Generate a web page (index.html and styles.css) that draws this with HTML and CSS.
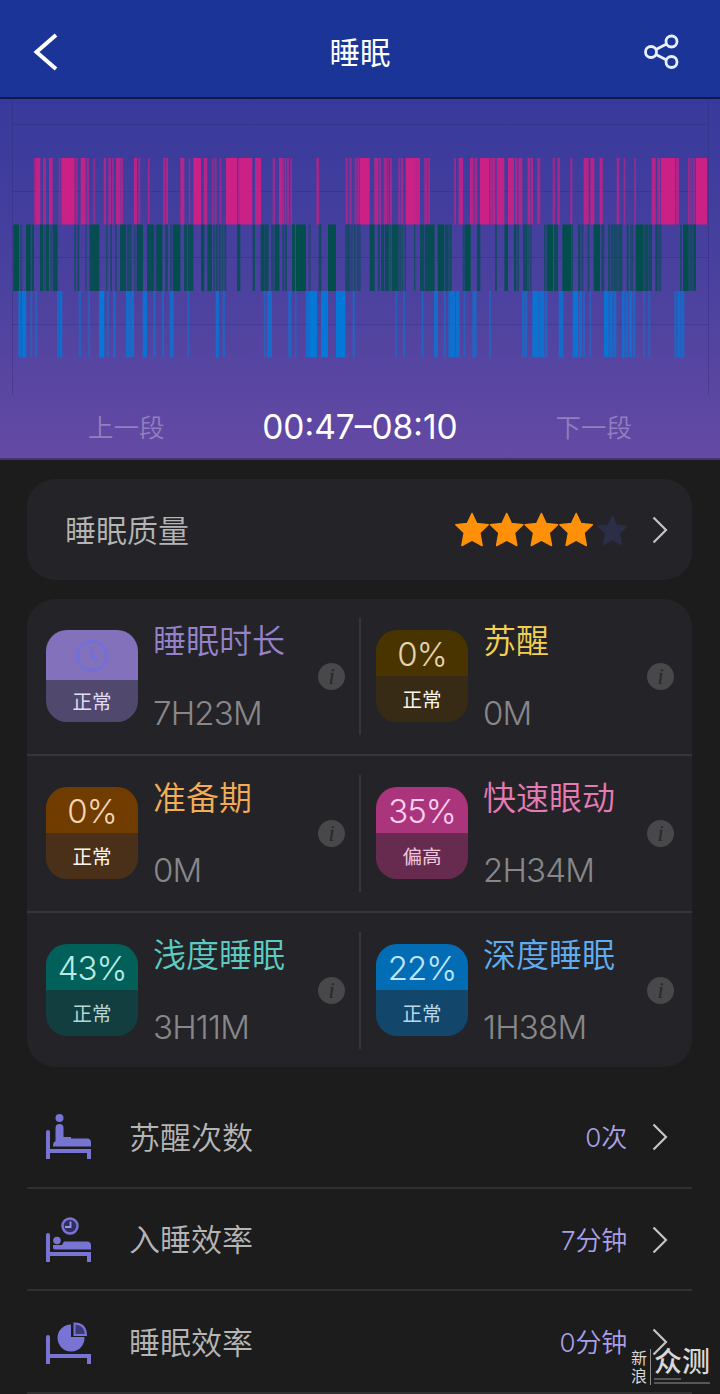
FILE: index.html
```html
<!DOCTYPE html>
<html lang="zh-CN">
<head>
    <meta charset="UTF-8">
    <meta name="viewport" content="width=device-width, initial-scale=1.0">
    <title>睡眠</title>
    <link rel="stylesheet" href="styles.css">
</head>
<body>

    <header class="topbar">
        <svg class="back" viewBox="0 0 28 40"><path d="M25 3 5.500 20 25 37"/></svg>
        <h1>睡眠</h1>
        <svg class="share" viewBox="0 0 36 36">
            <circle cx="7" cy="18" r="5.500"/><circle cx="27.500" cy="7.500" r="5.500"/><circle cx="27.500" cy="28" r="5.500"/>
            <path d="M12 15.500 22.500 10M12 20.500 22.500 26"/>
        </svg>
    </header>

    <section class="chart">
        <svg class="stages" viewBox="0 0 720 296">
            <path class="grid" d="M12.500 0v296M708.500 0v296M12 25.500h696M12 92.500h696M12 158.500h696M12 225.500h696"/>
            <g id="rem"></g>
            <g id="light"></g>
            <g id="deep"></g>
        </svg>
        <div class="period">
            <span class="step">上一段</span>
            <span class="time">00:47–08:10</span>
            <span class="step">下一段</span>
        </div>
    </section>

    <section class="quality">
        <span class="quality-name">睡眠质量</span>
        <svg class="stars" viewBox="0 0 174 36">
            <defs><path id="star" d="M17 1.500 21.600 11.400 33.200 12.800 24.800 20.800 27.100 33.500 17 28 6.900 33.500 9.200 20.800.8 12.800 12.400 11.400Z"/></defs>
            <use href="#star"/><use href="#star" x="34.700"/><use href="#star" x="69.400"/><use href="#star" x="104.200"/>
            <use class="star-off" href="#star" transform="translate(142.500 3) scale(.88)"/>
        </svg>
        <svg class="arrow" viewBox="0 0 16 28"><path d="M1.500 1.500 14 14 1.500 26.500"/></svg>
    </section>

    <section class="stats">
        <div class="cell">
            <div class="badge total">
                <b><svg class="clock" viewBox="0 0 34 34"><circle cx="17" cy="17" r="14.500"/><path d="M17 8v9l5 5"/></svg></b>
                <i>正常</i>
            </div>
            <div class="info"><h3 class="c-total">睡眠时长</h3><p>7H23M</p></div>
            <span class="tip">i</span>
        </div>
        <div class="cell">
            <div class="badge awake"><b>0%</b><i>正常</i></div>
            <div class="info"><h3 class="c-awake">苏醒</h3><p>0M</p></div>
            <span class="tip">i</span>
        </div>
        <div class="cell">
            <div class="badge ready"><b>0%</b><i>正常</i></div>
            <div class="info"><h3 class="c-ready">准备期</h3><p>0M</p></div>
            <span class="tip">i</span>
        </div>
        <div class="cell">
            <div class="badge rem"><b>35%</b><i>偏高</i></div>
            <div class="info"><h3 class="c-rem">快速眼动</h3><p>2H34M</p></div>
            <span class="tip">i</span>
        </div>
        <div class="cell">
            <div class="badge light"><b>43%</b><i>正常</i></div>
            <div class="info"><h3 class="c-light">浅度睡眠</h3><p>3H11M</p></div>
            <span class="tip">i</span>
        </div>
        <div class="cell">
            <div class="badge deep"><b>22%</b><i>正常</i></div>
            <div class="info"><h3 class="c-deep">深度睡眠</h3><p>1H38M</p></div>
            <span class="tip">i</span>
        </div>
    </section>

    <section class="list">
        <div class="row">
            <svg class="bed" viewBox="0 0 46 46">
                <path d="M0 18q0-2 2-2t2 2v17h41v10h-4v-6H4v6H0Z"/>
                <circle cx="13.500" cy="4" r="4"/>
                <path d="M9.500 14q0-4 4-4t4 4v9h7.500v1.500h16q4 0 4 4v4H7q0-5 2.500-5Z"/>
            </svg>
            <span class="name">苏醒次数</span>
            <span class="value">0次</span>
            <svg class="arrow" viewBox="0 0 16 28"><path d="M1.500 1.500 14 14 1.500 26.500"/></svg>
        </div>
        <div class="row">
            <svg class="bed" viewBox="0 0 46 46">
                <path d="M0 18q0-2 2-2t2 2v17h41v10h-4v-6H4v6H0Z"/>
                <circle cx="11" cy="23.500" r="3.800"/>
                <path d="M7 28h9l2-3.500h23q4 0 4 4v4H9q-2 0-2-2Z"/>
                <circle class="face" cx="24" cy="9" r="7.500"/>
                <path class="hands" d="M24.500 4.500V10H19"/>
            </svg>
            <span class="name">入睡效率</span>
            <span class="value">7分钟</span>
            <svg class="arrow" viewBox="0 0 16 28"><path d="M1.500 1.500 14 14 1.500 26.500"/></svg>
        </div>
        <div class="row">
            <svg class="bed" viewBox="0 0 46 46">
                <path d="M0 18q0-2 2-2t2 2v17h41v10h-4v-6H4v6H0Z"/>
                <path d="M25 5.500V18h13.500A13.500 13.500 0 1 1 25 5.500Z"/>
                <path class="slice" d="M28.500 4.500q11 0 11.500 11.500H28.500Z"/>
            </svg>
            <span class="name">睡眠效率</span>
            <span class="value">0分钟</span>
            <svg class="arrow" viewBox="0 0 16 28"><path d="M1.500 1.500 14 14 1.500 26.500"/></svg>
        </div>
    </section>

    <div class="watermark">
        <span class="wm-small">新<br>浪</span>
        <span class="wm-big">众测</span>
    </div>

    <script src="chart.js"></script>
</body>
</html>
```
FILE: styles.css
```css
* {
    box-sizing: border-box;
}

body {
    position: relative;
    width: 720px;
    height: 1394px;
    margin: 0;
    overflow: hidden;
    background: #1c1c1c;
    font-family: Inter, "Noto Sans CJK SC", sans-serif;
    font-weight: 350;
    color: #b5b5b6;
}

svg {
    display: block;
    flex: none;
}

.topbar {
    display: flex;
    justify-content: space-between;
    align-items: center;
    height: 99px;
    padding: 6px 40px 0 31px;
    background: #1a3597;
    border-bottom: 2px solid #10184a;
}

.topbar h1 {
    margin: 2px 0 0 17px;
    font-size: 30.5px;
    font-weight: 400;
    line-height: 40px;
    color: #fff;
}

.back {
    width: 28px;
    height: 40px;
    fill: none;
    stroke: #fff;
    stroke-width: 4;
}

.share {
    width: 36px;
    height: 36px;
    fill: none;
    stroke: #e9f0ff;
    stroke-width: 2.8;
}

.chart {
    height: 361px;
    background: linear-gradient(#373a9c, #4b419f 52%, #644aa4);
    border-bottom: 2px solid #42356b;
}

.stages {
    width: 720px;
    height: 296px;
}

.grid {
    fill: none;
    stroke: #2c2d75;
    stroke-opacity: .4;
}

#rem { fill: #cb2086; }
#light { fill: #024e4d; }
#deep { fill: #0478d6; }

.period {
    display: flex;
    justify-content: space-between;
    align-items: center;
    height: 64px;
    padding: 0 88px;
}

.step {
    margin-top: -3px;
    font-size: 25.5px;
    color: #937fbd;
}

.time {
    font-size: 33.5px;
    font-weight: 400;
    color: #fff;
}

.quality {
    display: flex;
    align-items: center;
    height: 101px;
    margin: 19px 28px 0 27px;
    padding: 0 24px 0 38px;
    border-radius: 28px;
    background: #242428;
}

.quality-name {
    flex: 1;
    margin-top: -2px;
    font-size: 31px;
}

.stars {
    width: 174px;
    height: 36px;
    margin-right: 23px;
    fill: #ff9007;
    stroke: #ff9007;
    stroke-width: 1.5;
    stroke-linejoin: round;
}

.star-off {
    fill: #2a2e47;
    stroke: #2a2e47;
}

.arrow {
    width: 16px;
    height: 28px;
    fill: none;
    stroke: #c4c4c4;
    stroke-width: 2.2;
}

.stats {
    display: grid;
    grid-template-columns: 334px 331px;
    grid-template-rows: 157px 157px 154px;
    height: 468px;
    margin: 19px 28px 0 27px;
    border-radius: 28px;
    background: #242428;
}

.cell {
    display: flex;
    padding: 31px 16px 0 19px;
    border-bottom: 2px solid #36363a;
    background: linear-gradient(#36363a, #36363a) right 19px / 2px 117px no-repeat;
}

.cell:nth-child(even) {
    padding-left: 15px;
    padding-right: 18px;
    background: none;
}

.cell:nth-child(n+5) {
    border-bottom: none;
}

.badge {
    display: flex;
    flex-direction: column;
    width: 92px;
    height: 92px;
    border-radius: 21px;
    overflow: hidden;
}

.badge b {
    display: flex;
    justify-content: center;
    align-items: center;
    height: 46px;
    padding-top: 2px;
    font-size: 33px;
    font-weight: 350;
    letter-spacing: -1px;
}

.badge i {
    display: flex;
    flex: 1;
    justify-content: center;
    align-items: center;
    padding-bottom: 2px;
    font-size: 19.5px;
    font-style: normal;
    font-weight: 400;
}

.total b { height: 50px; background: #8371bb; }
.total i { background: #51486e; color: #e3dbf6; }
.awake b { background: #493400; color: #e3d5b0; }
.awake i { background: #372b15; color: #fbf6ea; }
.ready b { background: #713c00; color: #f3d5b3; }
.ready i { background: #4b3019; color: #fff7ee; }
.rem b { background: #ab357d; color: #ffd0ed; }
.rem i { background: #672b50; color: #f0c6de; }
.light b { background: #02605a; color: #b8ebe5; }
.light i { background: #133e40; color: #b5d7d5; }
.deep b { background: #026db4; color: #c0e6ff; }
.deep i { background: #13466b; color: #b8d8ee; }

.clock {
    width: 34px;
    height: 34px;
    fill: none;
    stroke: #766fd3;
    stroke-width: 3.5;
}

.info {
    flex: 1;
    padding-left: 15px;
}

.info h3 {
    margin: -10px 0 0;
    font-size: 33px;
    font-weight: 350;
    line-height: 42px;
    white-space: nowrap;
}

.info p {
    margin: 30px 0 0;
    font-size: 33px;
    line-height: 42px;
    letter-spacing: -.8px;
    color: #88888a;
}

.c-total { color: #9582cb; }
.c-awake { color: #f3d150; }
.c-ready { color: #f3ad55; }
.c-rem { color: #e67ab4; }
.c-light { color: #5accc2; }
.c-deep { color: #60adef; }

.tip {
    width: 27px;
    height: 27px;
    margin-top: 33px;
    border-radius: 50%;
    background: #48484b;
    font: italic 24px/26px "Liberation Serif", serif;
    text-align: center;
    color: #29292c;
}

.list {
    margin: 19px 28px 0 27px;
}

.row {
    display: flex;
    align-items: center;
    height: 102.5px;
    padding: 2px 24px 0 19px;
    border-bottom: 2px solid #303031;
}

.bed {
    width: 46px;
    height: 46px;
    fill: #7774d4;
}

.face {
    fill: #302d60;
    stroke: #7774d4;
    stroke-width: 2.5;
}

.hands {
    fill: none;
    stroke: #9a98df;
    stroke-width: 1.8;
}

.slice {
    fill: #3b3979;
    stroke: #7774d4;
    stroke-width: 2;
}

.name {
    flex: 1;
    margin: -4px 0 0 37px;
    font-size: 31px;
}

.value {
    margin: -3px 25px 0 0;
    font-size: 26px;
    letter-spacing: -.2px;
    color: #aaa0e8;
}

.watermark {
    position: absolute;
    right: 10px;
    bottom: 9px;
    display: flex;
    color: #d8d8d8;
}

.wm-small {
    padding-right: 3px;
    border-right: 1px solid #8a8a8a;
    font-size: 16px;
    font-weight: 400;
    line-height: 18px;
}

.wm-big {
    height: 35px;
    margin-left: 3px;
    border-bottom: 2px solid #575757;
    background: linear-gradient(#575757, #575757) left bottom 2px / 27px 2px no-repeat;
    font-size: 28px;
    font-weight: 500;
    line-height: 26px;
}
```
FILE: chart.js
```js
// start-end:strength, in thirds of a pixel
const stages = {
    rem: '102-108:5 108-121:9 129-138:6 147-158:8 176-181:5 184-224:10 227-233:6 242-257:9 260-267:6 280-286:4 311-318:7 325-333:6 336-341:5 348-362:8 363-369:6 402-411:8 415-421:5 444-449:6 489-495:6 497-504:7 541-553:8 567-571:6 580-603:10 611-622:8 636-641:5 644-650:4 659-664:5 678-711:10 714-720:7 ' +
        '720-757:10 765-783:9 818-825:5 837-848:9 848-853:6 854-859:6 861-867:5 871-876:6 949-957:6 1037-1043:6 1048-1055:5 1064-1070:6 1072-1077:6 1079-1109:10 1123-1135:8 1137-1144:6 1151-1161:6 1163-1167:5 1170-1176:6 1195-1201:6 1203-1210:6 1217-1242:10 1242-1260:9 1273-1282:6 1284-1290:6 1362-1368:5 1376-1389:8 1410-1420:8 1423-1432:6 ' +
        '1440-1468:10 1470-1478:7 1478-1486:8 1490-1513:9 1524-1542:9 1545-1552:7 1555-1567:7 1583-1590:8 1592-1599:7 1611-1621:6 1658-1665:5 1672-1680:6 1711-1717:6 1751-1766:8 1771-1783:8 1799-1808:8 1850-1858:6 1871-1876:5 1903-1908:6 1955-1967:8 1972-1981:7 1983-2026:10 2028-2037:7 2064-2069:6 2071-2077:4 2079-2086:4 2088-2121:10',
    light: '40-57:10 60-67:3 78-92:10 95-102:8 120-129:9 130-137:3 138-147:9 150-156:3 158-173:9 223-228:6 232-238:6 255-260:3 269-298:9 318-322:5 331-336:6 345-350:5 360-378:9 380-395:6 401-407:3 410-429:9 441-462:9 464-467:5 469-487:10 496-503:8 510-517:5 519-541:10 552-561:8 563-580:8 603-613:9 622-636:9 639-645:4 647-653:6 656-662:6 665-670:5 673-679:5 711-721:8 ' +
        '758-765:7 782-794:9 795-806:8 813-823:4 824-838:9 847-853:5 855-861:6 876-885:9 888-918:10 926-932:4 956-964:7 984-1008:10 1036-1051:6 1053-1058:4 1061-1067:5 1070-1082:4 1109-1124:9 1133-1140:6 1143-1152:8 1154-1167:8 1169-1174:5 1176-1196:9 1198-1204:6 1206-1210:5 1214-1218:6 1242-1246:6 1260-1272:8 1274-1304:9 1313-1333:10 1335-1346:8 1348-1355:7 1388-1394:6 1395-1412:10 1431-1441:8 ' +
        '1485-1491:6 1513-1524:9 1542-1549:9 1552-1557:6 1569-1582:7 1583-1587:4 1589-1595:4 1632-1637:6 1640-1659:10 1662-1674:8 1687-1713:10 1714-1719:6 1734-1741:7 1744-1750:5 1763-1768:6 1781-1800:10 1804-1813:6 1824-1830:6 1832-1840:6 1841-1853:6 1855-1867:6 1880-1886:6 1890-1900:4 1907-1931:10 1933-1944:8 1945-1956:7 1966-1973:8 1975-1984:4 2040-2045:6 2049-2066:10 2068-2078:6 2080-2088:9',
    deep: '55-64:7 66-79:9 91-97:4 105-112:4 171-178:6 179-187:7 236-243:4 265-270:5 297-313:10 320-327:3 339-347:5 378-390:7 391-402:8 428-441:8 460-467:5 486-492:4 509-521:7 562-568:4 647-657:7 668-675:4 ' +
        '791-797:4 801-816:7 865-874:6 885-890:3 917-930:7 930-951:10 963-984:10 1008-1036:10 1058-1064:6 1186-1191:4 1209-1215:4 1265-1270:5 1302-1314:7 1331-1338:4 1344-1350:4 1350-1366:8 1368-1379:8 1391-1396:4 1417-1430:5 ' +
        '1467-1473:4 1566-1574:5 1575-1582:5 1597-1616:9 1617-1633:8 1635-1643:5 1676-1690:7 1718-1734:9 1736-1746:6 1748-1755:4 1768-1774:3 1812-1826:9 1828-1838:7 1840-1849:6 1866-1874:7 1876-1885:6 1887-1896:7 1898-1906:5 1929-1934:4 1945-1951:4 2023-2030:5 2032-2042:7 2044-2053:6'
};
const tops = { rem: 59, light: 125.5, deep: 192 };

for (const name in stages) {
    const group = document.getElementById(name);
    stages[name].split(' ').forEach(bar => {
        const [range, strength] = bar.split(':');
        const [start, end] = range.split('-').map(Number);
        const rect = document.createElementNS('http://www.w3.org/2000/svg', 'rect');
        rect.setAttribute('x', start / 3);
        rect.setAttribute('y', tops[name]);
        rect.setAttribute('width', (end - start) / 3);
        rect.setAttribute('height', 66.5);
        rect.setAttribute('opacity', 0.25 + strength * 0.075);
        group.appendChild(rect);
    });
}
```
